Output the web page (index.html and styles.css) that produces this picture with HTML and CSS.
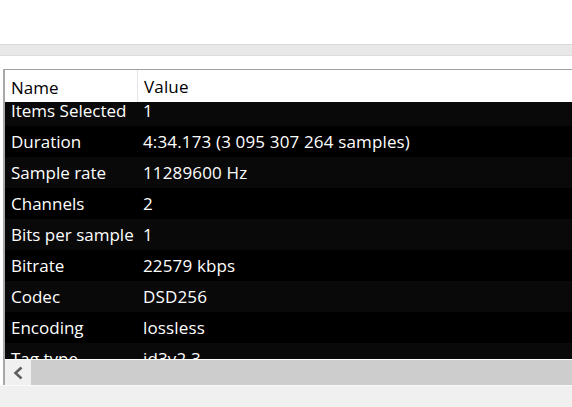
FILE: index.html
```html
<!DOCTYPE html>
<html>
<head>
<meta charset="utf-8">
<link rel="stylesheet" href="styles.css">
</head>
<body>
<div class="top"></div>
<div class="band"></div>
<div class="gap"></div>
<div class="frame">
  <div class="list">
    <div class="header">
      <div class="col-name">Name</div>
      <div class="col-value">Value</div>
    </div>
    <div class="body">
      <div class="rows">
        <div class="row alt"><div class="col-name">Items Selected</div><div class="col-value">1</div></div>
        <div class="row"><div class="col-name">Duration</div><div class="col-value">4:34.173 (3 095 307 264 samples)</div></div>
        <div class="row alt"><div class="col-name">Sample rate</div><div class="col-value">11289600 Hz</div></div>
        <div class="row"><div class="col-name">Channels</div><div class="col-value">2</div></div>
        <div class="row alt"><div class="col-name">Bits per sample</div><div class="col-value">1</div></div>
        <div class="row"><div class="col-name">Bitrate</div><div class="col-value">22579 kbps</div></div>
        <div class="row alt"><div class="col-name">Codec</div><div class="col-value">DSD256</div></div>
        <div class="row"><div class="col-name">Encoding</div><div class="col-value">lossless</div></div>
        <div class="row alt"><div class="col-name">Tag type</div><div class="col-value">id3v2.3</div></div>
      </div>
    </div>
    <div class="hscroll">
      <div class="arrow">
        <svg class="chev" width="14" height="16" viewBox="0 0 14 16"><path d="M10.5 2.5 L4.5 8 L10.5 13.5" fill="none" stroke="#5f5f5f" stroke-width="2.6"/></svg>
      </div>
      <div class="thumb"></div>
    </div>
  </div>
</div>
<div class="bottom"></div>
</body>
</html>
```
FILE: styles.css
```css
html, body {
  margin: 0;
  padding: 0;
  width: 572px;
  height: 407px;
  overflow: hidden;
  background: #f0f0f0;
  font-family: "Open Sans", "Noto Sans", sans-serif;
  font-size: 17px;
}
.top {
  height: 44px;
  background: #ffffff;
}
.band {
  height: 10px;
  background: #e8e8e8;
  border-top: 1px solid #d8d8d8;
  border-bottom: 1px solid #dcdcdc;
}
.gap {
  height: 13px;
  background: #ffffff;
}
.frame {
  background: #ffffff;
  padding-left: 1px;
}
.list {
  margin-left: 2px;
  border-left: 2px solid #a8a8a8;
  border-top: 1px solid #a0a0a0;
  background: #ffffff;
}
.header {
  display: flex;
  height: 32px;
  align-items: center;
  background: #ffffff;
  color: #000;
}
.col-name {
  width: 126px;
  padding-left: 6px;
  flex: none;
  white-space: nowrap;
}
.col-value {
  padding-left: 6px;
  white-space: nowrap;
  letter-spacing: 0.15px;
}
.header .col-name {
  height: 32px;
  line-height: 35px;
  border-right: 1px solid #e5e5e5;
}
.header .col-value {
  line-height: 35px;
}
.body {
  height: 257px;
  overflow: hidden;
  background: #000;
  border-bottom: 1px solid #ffffff;
}
.rows {
  margin-top: -7px;
}
.row {
  display: flex;
  height: 31px;
  align-items: center;
  background: #000000;
  color: #ffffff;
}
.row.alt {
  background: #090909;
}
.hscroll {
  display: flex;
  height: 25px;
  background: #f0f0f0;
}
.arrow {
  width: 26px;
  display: flex;
  align-items: center;
  justify-content: center;
  background: #f0f0f0;
}
.chev {
  display: block;
}
.thumb {
  flex: 1;
  background: #cdcdcd;
}
.bottom {
  height: 22px;
  background: #f0f0f0;
  border-top: 1px solid #fafafa;
}
```
